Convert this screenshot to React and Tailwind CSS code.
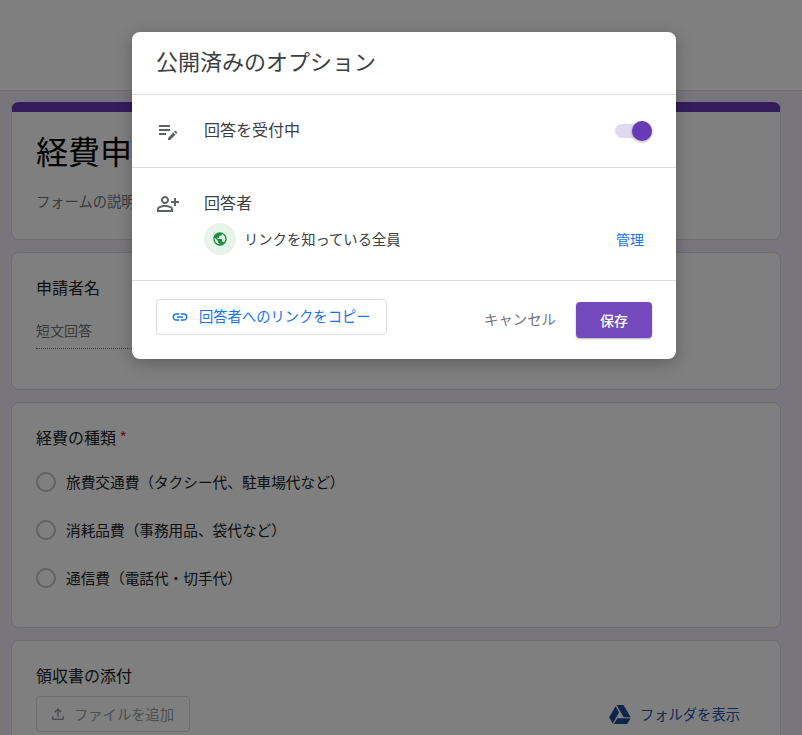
import React from "react";
import { MdLink, MdOutlinePersonAddAlt, MdPublic, MdOutlineFileUpload } from "react-icons/md";

function EditNote() {
  return (
    <svg viewBox="0 0 24 24" className="w-6 h-6 fill-[#5f6368]">
      <path d="M3,10h11v2H3V10z M3,8h11V6H3V8z M3,16h7v-2H3V16z M18.01,12.87l0.71-0.71c0.39-0.39,1.02-0.39,1.41,0l0.71,0.71c0.39,0.39,0.39,1.02,0,1.41l-0.71,0.71L18.01,12.87z M17.3,13.58l-5.3,5.3V21h2.12l5.3-5.3L17.3,13.58z" />
    </svg>
  );
}

function Drive() {
  return (
    <svg viewBox="0 0 24 21" className="w-[22px] h-[19px] fill-[#1a4a94]">
      <path d="M8.2 0h7.6l8 13.6h-7.7z" />
      <path d="M7.2 1.4l3.8 6.6L4 20.4 0 13.6z" />
      <path d="M9 14.6h14.8l-4 6.4H5.2z" />
    </svg>
  );
}

function Radio({ label }) {
  return (
    <div className="flex items-center gap-[10px] h-6">
      <span className="w-5 h-5 rounded-full border-2 border-[#c4c4c4]" />
      <span className="text-[14.67px] text-[#202124]">{label}</span>
    </div>
  );
}

function Card({ className, children }) {
  return <div className={"bg-white rounded-lg border border-[#dadce0] " + className}>{children}</div>;
}

export default function App() {
  return (
    <div className="relative w-full h-[735px] overflow-hidden bg-[#f0ebf8] font-['Noto_Sans_CJK_JP','Liberation_Sans',sans-serif]">
      <div className="h-[91px] bg-white border-b border-[#e0e0e0]" />
      <div className="flex flex-col gap-3 pt-[11px] pl-[11px] pr-[21px]">
        <div className="h-[138px] rounded-lg bg-white border border-[#dadce0] border-t-[10px] border-t-[#673ab7] pl-6 pt-[14px]">
          <div className="text-[32px] leading-[48px] text-[#000]">経費申請</div>
          <div className="mt-[17px] text-[14.3px] leading-5 text-[#70757a]">フォームの説明</div>
        </div>
        <Card className="h-[138px] pl-6 pt-[22px]">
          <div className="text-base leading-6 text-[#202124]">申請者名</div>
          <div className="mt-[21px] w-[340px] h-[29px] border-b border-dotted border-[#70757a] text-sm leading-5 text-[#70757a]">短文回答</div>
        </Card>
        <Card className="h-[226px] pl-6 pt-[22px]">
          <div className="text-base leading-6 text-[#202124]">
            経費の種類 <span className="text-[#d93025]">*</span>
          </div>
          <div className="mt-[21px] flex flex-col gap-[24px]">
            <Radio label="旅費交通費（タクシー代、駐車場代など）" />
            <Radio label="消耗品費（事務用品、袋代など）" />
            <Radio label="通信費（電話代・切手代）" />
          </div>
        </Card>
        <Card className="h-[200px] pl-6 pt-[22px] pr-[40px]">
          <div className="text-base leading-6 text-[#202124]">領収書の添付</div>
          <div className="mt-[9px] flex items-center justify-between">
            <div className="flex items-center gap-[7px] w-[154px] h-9 pl-3 rounded border border-[#dadce0] text-[14.3px] text-[#9aa0a6]">
              <MdOutlineFileUpload className="w-[18px] h-[18px]" />
              ファイルを追加
            </div>
            <div className="flex items-center gap-[9px] text-[14.3px] text-[#2a56a8]">
              <Drive />
              フォルダを表示
            </div>
          </div>
        </Card>
      </div>

      <div className="absolute inset-0 bg-black/50" />

      <div className="absolute left-[132px] top-8 w-[544px] h-[327px] bg-white rounded-lg shadow-[0_4px_16px_rgba(0,0,0,0.25)] flex flex-col">
        <div className="h-[63px] shrink-0 border-b border-[#dadce0] px-6 pb-[6px] flex items-center text-[22px] text-[#3c4043]">
          公開済みのオプション
        </div>
        <div className="h-[73px] shrink-0 border-b border-[#dadce0] pl-6 pr-6 flex items-center">
          <EditNote />
          <span className="ml-6 -mt-[5px] text-base text-[#3c4043]">回答を受付中</span>
          <div className="ml-auto relative w-[37px] h-[14px] rounded-full bg-[#e1d8f1]">
            <span className="absolute right-0 top-[-3px] w-5 h-5 rounded-full bg-[#673ab7] shadow-[0_1px_3px_rgba(0,0,0,0.35)]" />
          </div>
        </div>
        <div className="h-[113px] shrink-0 border-b border-[#dadce0] pl-6 pr-8 pt-[22px] flex">
          <MdOutlinePersonAddAlt className="w-6 h-6 mt-[2px] text-[#5f6368]" />
          <div className="ml-6 flex-1">
            <div className="text-base leading-6 text-[#3c4043]">回答者</div>
            <div className="mt-[9px] flex items-center">
              <span className="w-8 h-8 rounded-full bg-[#e6f4ea] flex items-center justify-center">
                <MdPublic className="w-4 h-4 text-[#1e8e3e]" />
              </span>
              <span className="ml-2 text-[14.3px] text-[#3c4043]">リンクを知っている全員</span>
              <span className="ml-auto text-sm text-[#1a73e8]">管理</span>
            </div>
          </div>
        </div>
        <div className="flex-1 pl-6 pr-6 flex items-start">
          <div className="mt-[18px] w-[231px] h-9 rounded border border-[#dadce0] flex items-center pl-[14px] pb-[2px] text-[14.3px] text-[#1a73e8]">
            <MdLink className="w-[18px] h-[18px] mt-[2px]" />
            <span className="ml-[10px]">回答者へのリンクをコピー</span>
          </div>
          <span className="ml-auto mt-5 h-9 leading-9 text-[14.4px] text-[#70757a]">キャンセル</span>
          <div className="ml-5 mt-[21px] w-[76px] h-9 rounded bg-[#7349bd] text-white text-sm font-medium flex items-center justify-center shadow-[0_1px_2px_rgba(0,0,0,0.3)]">
            保存
          </div>
        </div>
      </div>
    </div>
  );
}
